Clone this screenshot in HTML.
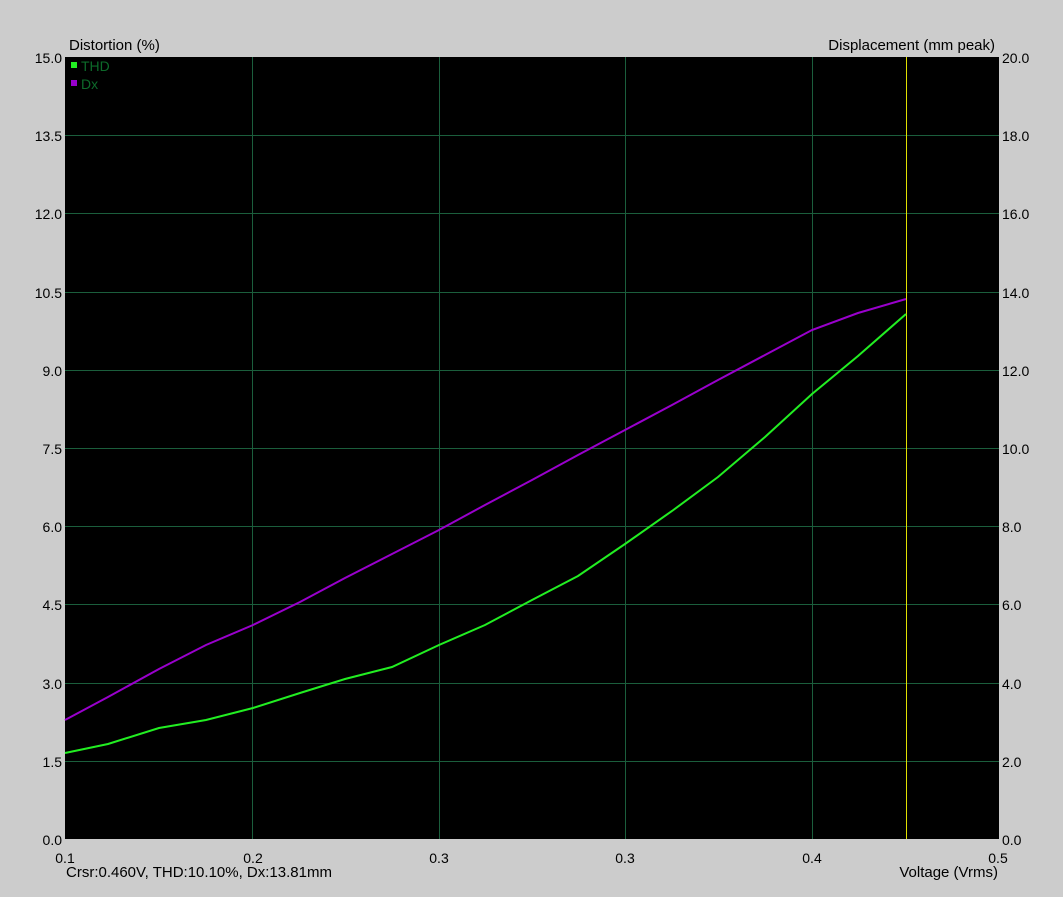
<!DOCTYPE html>
<html><head><style>
body{margin:0;background:#cccccc;width:1063px;height:897px;overflow:hidden;font-family:"Liberation Sans",Arial,sans-serif;}
</style></head><body>
<svg width="1063" height="897" xmlns="http://www.w3.org/2000/svg" style="position:absolute;left:0;top:0" font-family="Liberation Sans, Arial, sans-serif" font-size="14">
<rect x="0" y="0" width="1063" height="897" fill="#cccccc"/>
<rect x="65" y="57" width="934" height="782" fill="#000"/>
<g stroke="#1b5e3c" stroke-width="1">
<line x1="252.5" y1="57" x2="252.5" y2="839"/>
<line x1="439.5" y1="57" x2="439.5" y2="839"/>
<line x1="625.5" y1="57" x2="625.5" y2="839"/>
<line x1="812.5" y1="57" x2="812.5" y2="839"/>
<line x1="65" y1="135.5" x2="999" y2="135.5"/>
<line x1="65" y1="213.5" x2="999" y2="213.5"/>
<line x1="65" y1="292.5" x2="999" y2="292.5"/>
<line x1="65" y1="370.5" x2="999" y2="370.5"/>
<line x1="65" y1="448.5" x2="999" y2="448.5"/>
<line x1="65" y1="526.5" x2="999" y2="526.5"/>
<line x1="65" y1="604.5" x2="999" y2="604.5"/>
<line x1="65" y1="683.5" x2="999" y2="683.5"/>
<line x1="65" y1="761.5" x2="999" y2="761.5"/>
</g>
<line x1="906.5" y1="57" x2="906.5" y2="839" stroke="#e0e000" stroke-width="1"/>
<polyline fill="none" stroke="#9900cc" stroke-width="2" points="65,720 108,697 159,669 206,645 253,625 300,602 345,578 392,554 439,530 485,505 532,480 578,455 625,430 672,405 718,380 765,355 812,330 858,313 906,299"/>
<polyline fill="none" stroke="#22ee22" stroke-width="2" points="65,753 108,744 159,728 206,720 253,708 300,693 345,679 392,667 439,645 485,625 532,600 578,576 625,544 672,511 718,477 765,437 812,394 858,356 906,314"/>
<rect x="71" y="62" width="6" height="6" fill="#22ee22"/>
<rect x="71" y="80" width="6" height="6" fill="#9900cc"/>
<g fill="#0d6a2a"><text x="81" y="71">THD</text><text x="81" y="89">Dx</text></g>
<g fill="#000">
<text x="69" y="50" font-size="15">Distortion (%)</text>
<text x="995" y="50" font-size="15" text-anchor="end">Displacement (mm peak)</text>
<g text-anchor="end">
<text x="62" y="63">15.0</text><text x="62" y="141">13.5</text><text x="62" y="219">12.0</text>
<text x="62" y="298">10.5</text><text x="62" y="376">9.0</text><text x="62" y="454">7.5</text>
<text x="62" y="532">6.0</text><text x="62" y="610">4.5</text><text x="62" y="689">3.0</text>
<text x="62" y="767">1.5</text><text x="62" y="845">0.0</text>
</g>
<g>
<text x="1002" y="63">20.0</text><text x="1002" y="141">18.0</text><text x="1002" y="219">16.0</text>
<text x="1002" y="298">14.0</text><text x="1002" y="376">12.0</text><text x="1002" y="454">10.0</text>
<text x="1002" y="532">8.0</text><text x="1002" y="610">6.0</text><text x="1002" y="689">4.0</text>
<text x="1002" y="767">2.0</text><text x="1002" y="845">0.0</text>
</g>
<g text-anchor="middle">
<text x="65" y="863">0.1</text><text x="253" y="863">0.2</text><text x="439" y="863">0.3</text>
<text x="625" y="863">0.3</text><text x="812" y="863">0.4</text><text x="998" y="863">0.5</text>
</g>
<text x="66" y="877" font-size="15">Crsr:0.460V, THD:10.10%, Dx:13.81mm</text>
<text x="998" y="877" font-size="15" text-anchor="end">Voltage (Vrms)</text>
</g>
</svg>
</body></html>
